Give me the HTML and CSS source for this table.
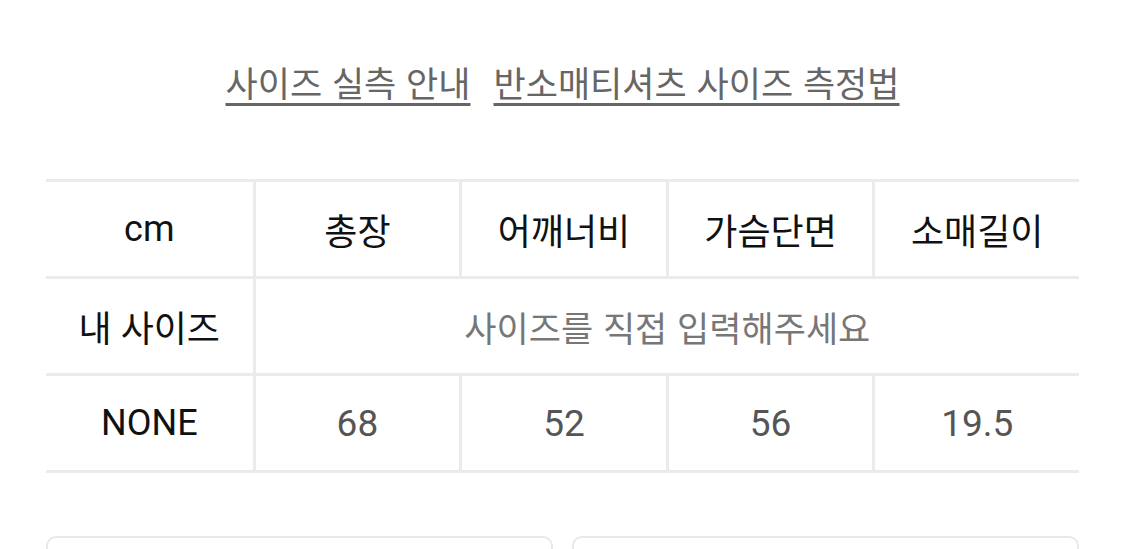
FILE: index.html
```html
<!DOCTYPE html>
<html lang="ko">
<head>
<meta charset="utf-8">
<link rel="stylesheet" href="styles.css">
</head>
<body>
<div class="page">
  <nav class="guide-links">
    <a class="guide-link" href="#">사이즈 실측 안내</a>
    <a class="guide-link" href="#">반소매티셔츠 사이즈 측정법</a>
  </nav>
  <div class="size-table">
    <div class="row">
      <div class="cell head">cm</div>
      <div class="cell head">총장</div>
      <div class="cell head">어깨너비</div>
      <div class="cell head">가슴단면</div>
      <div class="cell head">소매길이</div>
    </div>
    <div class="row">
      <div class="cell head">내 사이즈</div>
      <div class="cell input span4">사이즈를 직접 입력해주세요</div>
    </div>
    <div class="row last">
      <div class="cell head">NONE</div>
      <div class="cell value">68</div>
      <div class="cell value">52</div>
      <div class="cell value">56</div>
      <div class="cell value">19.5</div>
    </div>
  </div>
  <div class="cards">
    <div class="card"></div>
    <div class="card"></div>
  </div>
</div>
</body>
</html>
```
FILE: styles.css
```css
html, body {
  margin: 0;
  padding: 0;
  background: #ffffff;
}
body {
  font-family: Roboto, "Noto Sans CJK KR", sans-serif;
  overflow: hidden;
}
.page {
  padding: 0 46px;
  height: 549px;
  box-sizing: border-box;
  overflow: hidden;
}
.guide-links {
  display: flex;
  justify-content: center;
  gap: 23px;
  padding-top: 58px;
  height: 179px;
  box-sizing: border-box;
}
.guide-link {
  font-family: "Noto Sans CJK KR", sans-serif;
  font-size: 35px;
  line-height: 48px;
  height: 48px;
  color: #666666;
  text-decoration: underline;
  text-decoration-thickness: 3px;
  text-underline-offset: 6px;
  text-decoration-color: #666666;
}
.size-table {
  border-top: 3px solid #ebebeb;
}
.row {
  display: grid;
  grid-template-columns: repeat(5, 1fr);
  height: 97px;
  border-bottom: 3px solid #ebebeb;
  box-sizing: border-box;
}
.cell {
  display: flex;
  align-items: center;
  justify-content: center;
  border-left: 3px solid #ebebeb;
  font-size: 36px;
  color: #111111;
}
.cell:first-child {
  border-left: none;
}
.head {
  font-family: Roboto, "Noto Sans CJK KR", sans-serif;
  font-weight: 400;
  color: #111111;
}
.span4 {
  grid-column: span 4;
}
.input {
  font-family: "Noto Sans CJK KR", sans-serif;
  font-size: 35px;
  color: #777777;
}
.value {
  font-size: 37px;
  color: #555555;
}
.cards {
  display: flex;
  gap: 19px;
  margin-top: 63px;
}
.card {
  flex: 1;
  height: 60px;
  border: 2px solid #e8e8e8;
  border-radius: 10px;
}
```
